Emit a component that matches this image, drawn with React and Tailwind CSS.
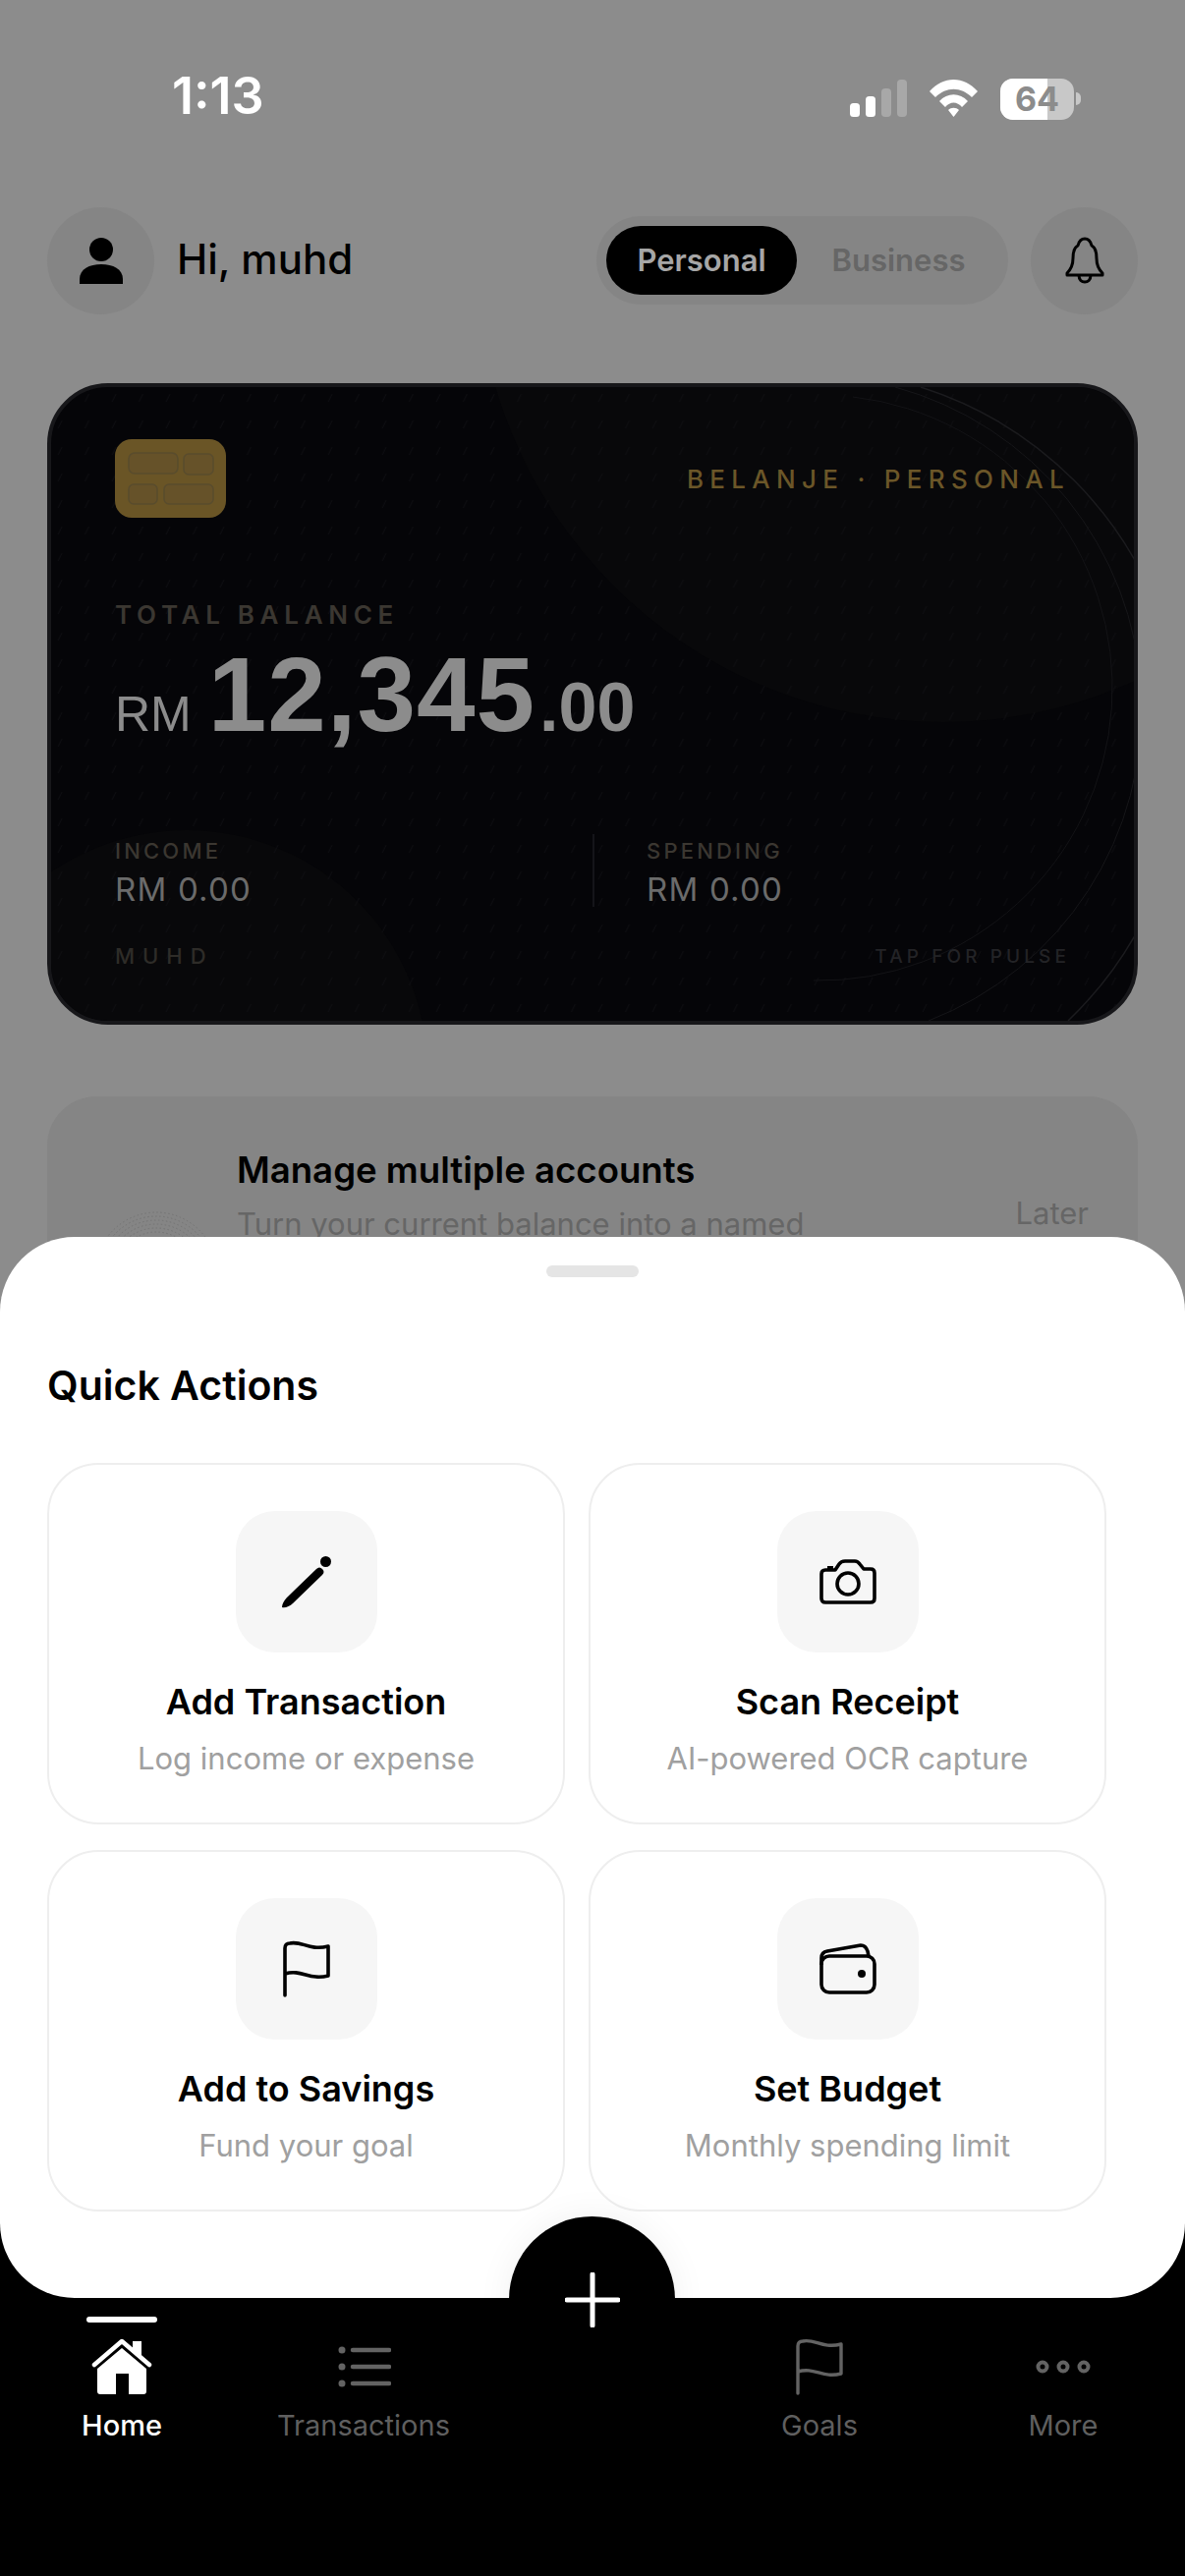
import React from 'react';

const sans = "font-['Inter','Liberation_Sans',sans-serif]";

function StatusBar() {
  return (
    <div className="flex h-[190px] items-start justify-between pl-[175px] pr-[106px] pt-[67px]">
      <span className="text-[52px] font-semibold leading-[62px] text-white">1:13</span>
      <div className="mt-[10px] flex items-end">
        <svg width="58" height="38" viewBox="0 0 58 38">
          <rect x="0" y="24" width="10" height="14" rx="3.5" fill="#fff" />
          <rect x="16" y="17" width="10" height="21" rx="3.5" fill="#fff" />
          <rect x="32" y="9" width="10" height="29" rx="4" fill="#a8a8a8" />
          <rect x="48" y="0" width="10" height="38" rx="4" fill="#a8a8a8" />
        </svg>
        <svg className="ml-[23px]" width="49" height="38" viewBox="0 0 49 38" fill="#fff">
          <path d="M0 12C14-4 35-4 49 12L43 18C32 7 17 7 6 18Z" />
          <path d="M10 22C18 13 31 13 39 22L33 28C28 22 21 22 16 28Z" />
          <path d="M19 31C22 28 27 28 30 31L24.5 38Z" />
        </svg>
        <div className="relative ml-[23px] flex h-[42px] w-[75px] translate-y-[3px] items-center justify-center overflow-hidden rounded-[13px] bg-[#c8c8c8]">
          <div className="absolute inset-y-0 left-0 w-[48px] bg-white" />
          <span className="relative text-[34px] font-bold leading-none text-[#8c8c8c]">64</span>
        </div>
        <div className="mb-[12px] ml-[2px] h-[13px] w-[5px] rounded-r-full bg-[#c8c8c8]" />
      </div>
    </div>
  );
}

function Header() {
  return (
    <div className="flex h-[110px] items-center justify-between px-[48px]">
      <div className="flex items-center gap-[23px]">
        <div className="flex h-[109px] w-[109px] items-center justify-center rounded-full bg-[#858585]">
          <svg width="44" height="47" viewBox="0 0 44 47" fill="#000">
            <ellipse cx="22" cy="12" rx="12" ry="12" />
            <path d="M0 47V42C0 32 10 27 22 27C34 27 44 32 44 42V47Z" />
          </svg>
        </div>
        <span className="-translate-y-[1px] text-[42px] font-medium leading-none text-black">Hi, muhd</span>
      </div>
      <div className="flex items-center gap-[23px]">
        <div className="flex h-[90px] w-[419px] items-center rounded-full bg-[#858585] pl-[10px] pr-[8px]">
          <div className="flex h-[70px] w-[194px] items-center justify-center rounded-full bg-black text-[31px] font-semibold text-[#a6a6a6]">
            Personal
          </div>
          <div className="flex-1 text-center text-[31px] font-semibold text-[#666666]">Business</div>
        </div>
        <div className="flex h-[109px] w-[109px] items-center justify-center rounded-full bg-[#858585]">
          <svg width="40" height="48" viewBox="0 0 40 48" fill="none" stroke="#000" strokeWidth="3" strokeLinejoin="round">
            <path d="M20 2C24 2 26 5 27 9C31 11 32 16 32 22C32 29 34 33 38 37V39H2V37C6 33 8 29 8 22C8 16 9 11 13 9C14 5 16 2 20 2Z" />
            <path d="M14 39C14 44 17 46 20 46C23 46 26 44 26 39" />
          </svg>
        </div>
      </div>
    </div>
  );
}

function CardArt() {
  return (
    <svg className="absolute inset-0 h-full w-full" viewBox="0 0 1102 645" fill="none">
      <defs>
        <pattern id="ticks" width="27.5" height="27" patternUnits="userSpaceOnUse">
          <path d="M7 15L11 7" stroke="#101014" strokeWidth="0.8" />
        </pattern>
      </defs>
      <circle cx="908" cy="-134" r="475" fill="#08080a" />
      <circle cx="138" cy="696" r="245" fill="#08080a" />
      <rect width="1102" height="645" fill="url(#ticks)" />
      <path d="M816 10A298 298 0 0 1 776 604" stroke="#131316" strokeWidth="1" />
      <path d="M859 0A340 340 0 0 1 893 645" stroke="#161619" strokeWidth="1" />
      <path d="M885 0A385 385 0 0 1 1035 645" stroke="#1b1b1e" strokeWidth="1.5" />
    </svg>
  );
}

function Chip() {
  return (
    <svg width="113" height="80" viewBox="0 0 113 80">
      <rect width="113" height="80" rx="17" fill="#6a5526" />
      <g fill="#665229" stroke="#594c2d" strokeWidth="1.5">
        <rect x="14" y="14" width="50" height="21" rx="6" />
        <rect x="70" y="15" width="30" height="21" rx="5" />
        <rect x="14" y="46" width="29" height="20" rx="5" />
        <rect x="50" y="46" width="50" height="20" rx="5" />
      </g>
    </svg>
  );
}

function BalanceCard() {
  return (
    <div className="relative mx-[48px] h-[653px] overflow-hidden rounded-[62px] border-4 border-[#17171a] bg-[#050508]">
      <CardArt />
      <div className="relative pl-[65px] pr-[65px] pt-[53px]">
        <div className="flex items-center justify-between">
          <Chip />
          <span className="translate-y-[1px] text-[26px] font-medium leading-none tracking-[6.3px] text-[#6b5628]">BELANJE · PERSONAL</span>
        </div>
        <div className="mt-[86px] text-[26px] font-semibold leading-none tracking-[5.7px] text-[#3b3731]">TOTAL BALANCE</div>
        <div className="mt-[14px] flex h-[108px] items-baseline font-['Liberation_Sans',sans-serif] leading-[108px] text-[#8c8c8c]">
          <span className="text-[50px]">RM</span>
          <span className="ml-[17px] text-[107px] font-bold tracking-[1px]">12,345</span>
          <span className="ml-[4px] text-[70px] font-bold">.00</span>
        </div>
        <div className="mt-[94px] flex">
          <div className="w-[486px]">
            <div className="text-[22px] font-medium leading-none tracking-[3.2px] text-[#3b3731]">INCOME</div>
            <div className="mt-[12px] text-[33px] leading-none tracking-[1.2px] text-[#6b6b6b]">RM 0.00</div>
          </div>
          <div className="h-[74px] w-[2px] -translate-y-[6px] bg-[#15151a]" />
          <div className="ml-[53px]">
            <div className="text-[22px] font-medium leading-none tracking-[3.2px] text-[#3b3731]">SPENDING</div>
            <div className="mt-[12px] text-[33px] leading-none tracking-[1.2px] text-[#6b6b6b]">RM 0.00</div>
          </div>
        </div>
        <div className="mt-[33px] flex items-center justify-between">
          <span className="text-[22px] font-medium leading-none tracking-[8px] text-[#2e2c28]">MUHD</span>
          <span className="text-[19px] font-medium leading-none tracking-[4.1px] text-[#232326]">TAP FOR PULSE</span>
        </div>
      </div>
    </div>
  );
}

function Banner() {
  return (
    <div className="mx-[48px] mt-[73px] flex h-[236px] rounded-[50px] bg-[#858585]">
      <svg className="ml-[48px] mt-[117px] shrink-0" width="126" height="126" viewBox="0 0 126 126" fill="none" stroke="#747474" strokeWidth="1" strokeDasharray="1.5 2.5">
        <circle cx="63" cy="63" r="62" />
        <circle cx="63" cy="63" r="58" />
        <circle cx="63" cy="63" r="54" />
        <circle cx="63" cy="63" r="50" />
        <circle cx="63" cy="63" r="46" />
        <circle cx="63" cy="63" r="42" />
      </svg>
      <div className="ml-[19px] flex-1 pt-[53px]">
        <div className="text-[36.6px] font-semibold leading-[44px] text-black">Manage multiple accounts</div>
        <div className="mt-[13px] text-[31px] leading-[40px] text-[#666666]">Turn your current balance into a named</div>
      </div>
      <span className="mr-[50px] self-center text-[31px] leading-none text-[#666666]">Later</span>
    </div>
  );
}

function PencilIcon() {
  return (
    <svg width="56" height="56" viewBox="0 0 56 56" fill="#000">
      <path d="M3 54C3 51 5 47 8 44L38 15Q41 12 44 15Q47 18 44 21L14 50C11 53 6 55 3 54Z" />
      <circle cx="47.5" cy="7.5" r="5.5" />
    </svg>
  );
}

function CameraIcon() {
  return (
    <svg width="58" height="46" viewBox="0 0 58 46" fill="none" stroke="#000" strokeWidth="3.6" strokeLinejoin="round">
      <path d="M6 11H16L20 5Q22 2 26 2H36Q39 2 41 5L45 10H52Q56 10 56 14V40Q56 44 52 44H6Q2 44 2 40V15Q2 11 6 11Z" />
      <circle cx="29" cy="25" r="11" />
      <rect x="8" y="7" width="6" height="4" fill="#000" stroke="none" />
    </svg>
  );
}

function FlagIcon({ color = '#000', width = 50, stroke = 3.6 }) {
  return (
    <svg width={width} height="58" viewBox="0 0 50 58" fill="none" stroke={color} strokeWidth={stroke} strokeLinecap="round" strokeLinejoin="round">
      <path d="M3 56V8Q3 3 8 3C20 0 28 11 47 6V36C28 41 20 29 3 34" />
    </svg>
  );
}

function WalletIcon() {
  return (
    <svg width="58" height="52" viewBox="0 0 58 52" fill="none" stroke="#000" strokeWidth="3.6" strokeLinejoin="round">
      <rect x="2" y="13" width="54" height="37" rx="8" />
      <path d="M2 22V15Q2 9 8 8L42 2Q47 2 49 8L50 13" />
      <circle cx="43" cy="31" r="4" fill="#000" stroke="none" />
    </svg>
  );
}

const actions = [
  { title: 'Add Transaction', sub: 'Log income or expense', icon: <PencilIcon /> },
  { title: 'Scan Receipt', sub: 'AI-powered OCR capture', icon: <CameraIcon /> },
  { title: 'Add to Savings', sub: 'Fund your goal', icon: <FlagIcon /> },
  { title: 'Set Budget', sub: 'Monthly spending limit', icon: <WalletIcon /> },
];

function QuickActions() {
  return (
    <div className="relative h-[1080px] rounded-[76px] bg-white">
      <div className="pt-[29px]">
        <div className="mx-auto h-[12px] w-[94px] rounded-full bg-[#e5e5e5]" />
      </div>
      <h2 className="ml-[48px] mt-[88px] text-[41px] font-semibold leading-[44px] text-black">Quick Actions</h2>
      <div className="ml-[48px] mt-[57px] grid grid-cols-[527px_527px] gap-[26px_24px]">
        {actions.map((a) => (
          <div key={a.title} className="flex h-[368px] flex-col items-center rounded-[52px] border-2 border-[#eeeeee] pt-[47px]">
            <div className="flex h-[144px] w-[144px] items-center justify-center rounded-[40px] bg-[#f6f6f6]">{a.icon}</div>
            <div className="mt-[27px] text-[36px] font-semibold leading-[46px] text-black">{a.title}</div>
            <div className="mt-[15px] text-[31px] leading-[40px] text-[#a0a0a0]">{a.sub}</div>
          </div>
        ))}
      </div>
    </div>
  );
}

function HomeIcon() {
  return (
    <svg width="62" height="58" viewBox="0 0 62 58" fill="#fff">
      <path d="M3 27L31 3L59 27" fill="none" stroke="#fff" strokeWidth="4.5" strokeLinecap="round" strokeLinejoin="round" />
      <path d="M42 3H51V19L42 11Z" />
      <path d="M31 10L56 31V54Q56 57 53 57H38V36H25V57H9Q6 57 6 54V31Z" />
    </svg>
  );
}

function ListIcon() {
  return (
    <svg className="translate-x-[1px]" width="54" height="46" viewBox="0 0 54 46" fill="#636363" stroke="#636363">
      <circle cx="4" cy="6" r="3.5" stroke="none" />
      <circle cx="4" cy="23" r="3.5" stroke="none" />
      <circle cx="4" cy="40" r="3.5" stroke="none" />
      <path d="M15 6H52M15 23H52M15 40H52" strokeWidth="4.5" strokeLinecap="round" />
    </svg>
  );
}

function DotsIcon() {
  return (
    <svg width="58" height="14" viewBox="0 0 58 14" fill="none" stroke="#636363" strokeWidth="4">
      <circle cx="8" cy="7" r="4.5" />
      <circle cx="29" cy="7" r="4.5" />
      <circle cx="50" cy="7" r="4.5" />
    </svg>
  );
}

function NavItem({ label, icon, active }) {
  return (
    <div className="relative flex flex-col items-center pt-[121px]">
      {active && <div className="absolute top-[99px] h-[6px] w-[72px] rounded-full bg-white" />}
      <div className="flex h-[58px] items-center justify-center">{icon}</div>
      <span className={`mt-[13px] text-[29px] leading-[36px] ${active ? 'font-medium text-white' : 'text-[#5f5f5f]'}`}>{label}</span>
    </div>
  );
}

function BottomNav() {
  return (
    <div className="-mt-[80px] grid flex-1 grid-cols-[248px_244px_218px_248px_248px] bg-black">
      <NavItem label="Home" icon={<HomeIcon />} active />
      <NavItem label="Transactions" icon={<ListIcon />} />
      <div />
      <NavItem label="Goals" icon={<FlagIcon color="#636363" stroke={3.4} />} />
      <NavItem label="More" icon={<DotsIcon />} />
    </div>
  );
}

export default function App() {
  return (
    <div className={`relative h-[2622px] w-[1206px] overflow-hidden bg-[#8c8c8c] ${sans}`}>
      <StatusBar />
      <div className="pt-[20px]">
        <Header />
      </div>
      <div className="mt-[70px]">
        <BalanceCard />
      </div>
      <Banner />
      {/* sheet and tab bar sit over the dimmed page */}
      <div className="absolute inset-x-0 bottom-0 top-[1259px] flex flex-col">
        <div className="relative z-10">
          <QuickActions />
        </div>
        <BottomNav />
      </div>
      <div className="absolute left-[518px] top-[2256px] z-20 flex h-[169px] w-[169px] items-center justify-center rounded-full bg-black shadow-[0_0_36px_rgba(0,0,0,0.06)]">
        <svg width="56" height="56" viewBox="0 0 56 56" stroke="#fff" strokeWidth="5" strokeLinecap="round">
          <path d="M28 2V54M2 28H54" />
        </svg>
      </div>
    </div>
  );
}
